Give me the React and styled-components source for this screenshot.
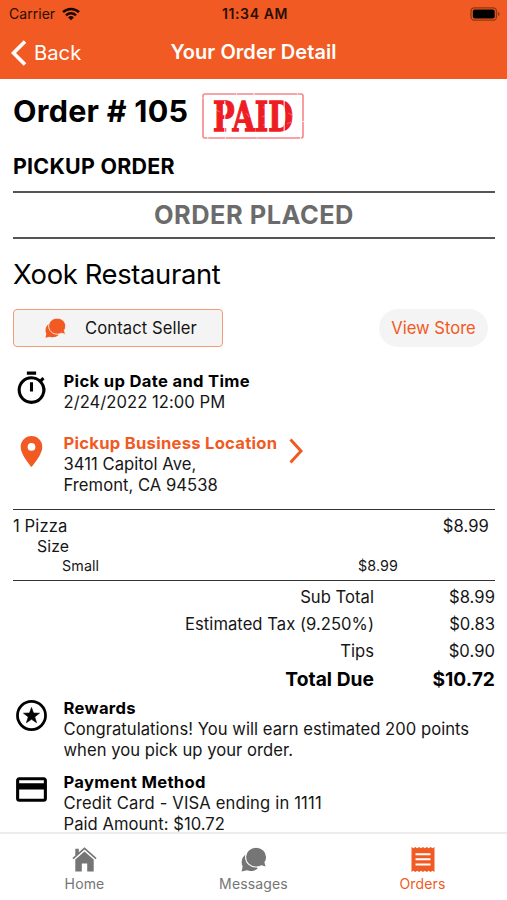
import React from "react"
import styled, { createGlobalStyle } from "styled-components"
import { MdOutlineTimer, MdLocationOn, MdCreditCard } from "react-icons/md"

const ORANGE = "#f15a22"

const GlobalStyle = createGlobalStyle`
  * {
    box-sizing: border-box;
  }
  body {
    margin: 0;
    background: #fff;
    color: #161616;
    font-family: Inter, "Liberation Sans", sans-serif;
    font-size: 16.6px;
    line-height: 21px;
    letter-spacing: 0.04px;
    white-space: nowrap;
  }
`

const Screen = styled.div`
  display: flex;
  flex-direction: column;
  width: 507px;
  height: 900px;
  overflow: hidden;
`

const Header = styled.header`
  flex: none;
  height: 79px;
  background: ${ORANGE};
`

const StatusBar = styled.div`
  display: grid;
  grid-template-columns: 1fr auto 1fr;
  align-items: center;
  height: 27px;
  padding: 0 6px 0 9px;
  color: #2b0d02;
  font-size: 14px;
`

const Carrier = styled.span`
  display: flex;
  align-items: center;
  gap: 7px;
`

const Clock = styled.span`
  font-weight: 600;
  font-size: 14px;
  letter-spacing: 0.6px;
`

const Battery = styled.svg`
  justify-self: end;
`

const NavBar = styled.div`
  display: grid;
  grid-template-columns: 1fr auto 1fr;
  align-items: center;
  height: 51px;
  padding: 0 10px;
  color: #fff;
`

const BackButton = styled.span`
  display: flex;
  align-items: center;
  gap: 7px;
  font-size: 20.2px;
`

const NavTitle = styled.span`
  font-size: 20px;
  font-weight: 600;
  letter-spacing: 0.05px;
`

const Content = styled.main`
  flex: 1;
  min-height: 0;
  padding: 0 12px 0 13px;
`

const OrderHeading = styled.div`
  display: flex;
  align-items: center;
  gap: 14px;
  height: 69px;
  padding-top: 6px;
`

const OrderNumber = styled.h1`
  margin: 0 0 12px;
  font-size: 30.5px;
  line-height: 36px;
  font-weight: 700;
  letter-spacing: 0.25px;
  color: #000;
`

const OrderType = styled.h2`
  margin: 0;
  padding: 5px 0 12px;
  font-size: 21.4px;
  line-height: 26px;
  font-weight: 700;
  letter-spacing: 0.25px;
  color: #000;
`

const OrderStatus = styled.div`
  height: 48px;
  border-top: 2px solid #555;
  border-bottom: 2px solid #555;
  color: #6b6b6b;
  font-size: 25.4px;
  line-height: 43px;
  font-weight: 700;
  letter-spacing: 0.5px;
  text-align: center;
`

const StoreName = styled.div`
  padding: 17px 0 17px;
  font-size: 27.4px;
  line-height: 36px;
  letter-spacing: -0.35px;
  color: #000;
`

const Actions = styled.div`
  display: flex;
  justify-content: space-between;
  padding-right: 7px;
`

const ContactButton = styled.button`
  display: flex;
  align-items: center;
  gap: 19px;
  width: 210px;
  height: 38px;
  padding: 0 0 0 31px;
  border: 1.5px solid #f29b78;
  border-radius: 4px;
  background: #f4f4f4;
  color: #161616;
  font: inherit;
  letter-spacing: 0.1px;
`

const StoreButton = styled.button`
  width: 109px;
  height: 38px;
  padding: 0;
  border: 0;
  border-radius: 19px;
  background: #f4f4f4;
  color: ${ORANGE};
  font: inherit;
`

const InfoRow = styled.section`
  display: grid;
  grid-template-columns: 37px auto 1fr;
  column-gap: 13.5px;
  height: ${(props) => props.$height}px;
  margin-top: ${(props) => props.$top || 0}px;
  line-height: 20.8px;
`

const InfoIcon = styled.span`
  display: flex;
  justify-content: center;
  height: 37px;
  margin-top: ${(props) => props.$shift || 0}px;
  color: ${(props) => props.$color || "#000"};
`

const InfoTitle = styled.div`
  color: ${(props) => props.$color || "#000"};
  font-weight: 700;
  letter-spacing: ${(props) => (props.$color ? 0.27 : 0.33)}px;
`

const CardText = styled.div`
  letter-spacing: 0.16px;
`

const Chevron = styled.svg`
  margin: 5px 0 0 -2px;
`

const Item = styled.div`
  height: 72px;
  border-top: 1.5px solid #333;
  border-bottom: 1.5px solid #333;
  padding: 6px 6px 0 0;
`

const ItemLine = styled.div`
  display: flex;
  justify-content: space-between;
  padding-left: ${(props) => props.$indent || 0}px;
  padding-right: ${(props) => props.$inset || 0}px;
  font-size: ${(props) => props.$size || 16.6}px;
  line-height: ${(props) => props.$line || 21}px;
  letter-spacing: 0.1px;
`

const Totals = styled.div`
  display: grid;
  grid-template-columns: 1fr 121px;
  padding-top: 3px;
  line-height: 27px;
  letter-spacing: 0.04px;
  text-align: right;
`

const TotalDue = styled.span`
  color: #000;
  font-size: 19.2px;
  line-height: 29px;
  font-weight: 700;
`

const TabBar = styled.nav`
  flex: none;
  display: grid;
  grid-template-columns: repeat(3, 1fr);
  height: 68px;
  border-top: 2px solid #ececec;
`

const Tab = styled.a`
  display: flex;
  flex-direction: column;
  align-items: center;
  justify-content: space-between;
  height: 61px;
  padding: 13px 0 1px;
  color: ${(props) => (props.$active ? ORANGE : "#757575")};
  font-size: 14px;
  letter-spacing: 0.15px;
`

const WifiIcon = () => (
  <svg width="18" height="14" viewBox="0 0 18 14" fill="none" stroke="#1a0800">
    <path d="M1 5.2a11.6 11.6 0 0 1 16 0" strokeWidth="2.5" />
    <path d="M4 8.3a7.3 7.3 0 0 1 10 0" strokeWidth="2.4" />
    <path d="M9 13.2 6.1 10.5a4.2 4.2 0 0 1 5.8 0Z" fill="#1a0800" stroke="none" />
  </svg>
)

const ChatIcon = ({ color, gap = "#fff", size = 24 }) => (
  <svg width={size} height={size * 0.96} viewBox="0 0 24 23">
    <path
      d="M6 6C2.500 7.500.6 10.300.6 14c0 1.500.3 2.800.9 4L.6 22.600l4.800-1.100c3.800 1.200 7.500.5 10-1.700Z"
      fill={color}
    />
    <path
      d="M14 .2c5.400 0 9.600 4 9.600 9 0 1.900-.5 3.600-1.500 5l1.400 4.600-4.600-1.500c-1.500.8-3.100 1.200-4.900 1.200-5.500 0-9.800-4.100-9.800-9.300S8.500.2 14 .2Z"
      fill={color}
      stroke={gap}
      strokeWidth="1"
    />
  </svg>
)

const StarIcon = () => (
  <svg width="37" height="37" viewBox="0 0 24 24">
    <circle cx="12" cy="12" r="9.100" fill="none" stroke="currentColor" strokeWidth="1.800" />
    <path
      d="M12 6.800 13.300 10.400 17.200 10.500 14.100 12.900 15.300 16.700 12 14.500 8.700 16.700 9.900 12.900 6.800 10.500 10.700 10.400Z"
      fill="currentColor"
      stroke="currentColor"
      strokeWidth=".4"
    />
  </svg>
)

const HomeIcon = () => (
  <svg width="25" height="25" viewBox="0 0 25 25" fill="currentColor">
    <path d="M12.500.300 17 4.300 24.600 11l-1.100 1.200-11-9.700-11 9.700L.4 11 3.300 8.400V1.700h3.500v3.600Z" />
    <path d="M12.500 4.400 21.700 12.500V24.600h-6.500v-8h-5.400v8H3.300V12.500Z" />
  </svg>
)

const ReceiptIcon = () => (
  <svg width="24" height="25" viewBox="0 0 24 25">
    <path
      d="M.5 0 2.400 1.300 4.300 0l1.900 1.300L8.100 0 10 1.300 12 0l1.900 1.300L15.800 0l1.900 1.300L19.600 0l1.900 1.300L23.500 0v25l-2-1.300-1.900 1.300-1.900-1.300-1.900 1.300-1.900-1.300L12 25l-2-1.300L8.100 25l-1.900-1.300L4.300 25l-1.900-1.300L.5 25Z"
      fill="currentColor"
    />
    <path d="M4.500 7.200h15M4.500 12.300h15M4.500 17.400h15" stroke="#fff" strokeWidth="2" />
  </svg>
)

const Stamp = styled.svg`
  overflow: visible;
`

const PaidStamp = () => (
  <Stamp width="102" height="63" viewBox="0 -8 102 63">
    <rect
      x="1"
      y="1"
      width="100"
      height="44"
      rx="2"
      fill="none"
      stroke="#f4868a"
      strokeWidth="1.600"
      strokeDasharray="31 .6 17 .8 43 .5"
    />
    <text
      x="11"
      y="37.500"
      fill="#ee1c23"
      stroke="#ee1c23"
      strokeWidth="1.300"
      fontFamily="DejaVu Serif, serif"
      fontWeight="700"
      fontSize="41"
      letterSpacing="0"
      textLength="80"
      lengthAdjust="spacingAndGlyphs"
    >
      PAID
    </text>
    {/* stencil cuts and worn ink */}
    <g stroke="#fff" fill="none">
      <path d="M22.800 8v32M82.200 8v32" strokeWidth="1.200" opacity=".85" />
      <path
        d="M14 17l4 2M44 20l3 4M61 14l4 2M60 24l4-2M61 32l3-1M76 15l4 2M76 25l4-2M86 20l4 2M85 31l4-2"
        strokeWidth=".8"
        opacity=".4"
      />
    </g>
  </Stamp>
)

const App = () => {
  return (
    <Screen>
      <GlobalStyle />
      <Header>
        <StatusBar>
          <Carrier>
            Carrier
            <WifiIcon />
          </Carrier>
          <Clock>11:34 AM</Clock>
          <Battery width="31" height="14" viewBox="0 0 31 14">
            <rect x="1" y=".8" width="25.500" height="12.400" rx="3.500" fill="none" stroke="#8f3714" strokeWidth="1.300" />
            <rect x="2.800" y="2.600" width="21.900" height="8.800" rx="2" fill="#000" />
            <path d="M28 5c2 .5 2 3.500 0 4Z" fill="#8f3714" />
          </Battery>
        </StatusBar>
        <NavBar>
          <BackButton>
            <svg width="17" height="26" viewBox="0 0 17 26" fill="none" stroke="#fff" strokeWidth="3.600">
              <path d="M15 1.500 3.500 13 15 24.500" />
            </svg>
            Back
          </BackButton>
          <NavTitle>Your Order Detail</NavTitle>
        </NavBar>
      </Header>

      <Content>
        <OrderHeading>
          <OrderNumber>Order # 105</OrderNumber>
          <PaidStamp />
        </OrderHeading>
        <OrderType>PICKUP ORDER</OrderType>
        <OrderStatus>ORDER PLACED</OrderStatus>
        <StoreName>Xook Restaurant</StoreName>
        <Actions>
          <ContactButton>
            <ChatIcon color={ORANGE} gap="#f4f4f4" size={21} />
            Contact Seller
          </ContactButton>
          <StoreButton>View Store</StoreButton>
        </Actions>

        <InfoRow $top={24} $height={62}>
          <InfoIcon $shift={-1}>
            <MdOutlineTimer size={37} />
          </InfoIcon>
          <div>
            <InfoTitle>Pick up Date and Time</InfoTitle>
            <div>2/24/2022 12:00 PM</div>
          </div>
        </InfoRow>
        <InfoRow $height={76}>
          <InfoIcon $color={ORANGE}>
            <MdLocationOn size={37} />
          </InfoIcon>
          <div>
            <InfoTitle $color={ORANGE}>Pickup Business Location</InfoTitle>
            <div>3411 Capitol Ave,</div>
            <div>Fremont, CA 94538</div>
          </div>
          <Chevron width="14" height="26" viewBox="0 0 14 26" fill="none" stroke={ORANGE} strokeWidth="3">
            <path d="M1.500 1.500 12 13 1.500 24.500" />
          </Chevron>
        </InfoRow>

        <Item>
          <ItemLine>
            <span>1 Pizza</span>
            <span>$8.99</span>
          </ItemLine>
          <ItemLine $indent={24} $size={15.800} $line={20}>
            Size
          </ItemLine>
          <ItemLine $indent={49} $inset={91} $size={14.300} $line={17}>
            <span>Small</span>
            <span>$8.99</span>
          </ItemLine>
        </Item>

        <Totals>
          <span>Sub Total</span>
          <span>$8.99</span>
          <span>Estimated Tax (9.250%)</span>
          <span>$0.83</span>
          <span>Tips</span>
          <span>$0.90</span>
          <TotalDue>Total Due</TotalDue>
          <TotalDue>$10.72</TotalDue>
        </Totals>

        <InfoRow $top={4} $height={74}>
          <InfoIcon $shift={-1}>
            <StarIcon />
          </InfoIcon>
          <div>
            <InfoTitle>Rewards</InfoTitle>
            <div>Congratulations! You will earn estimated 200 points</div>
            <div>when you pick up your order.</div>
          </div>
        </InfoRow>
        <InfoRow $height={62}>
          <InfoIcon $shift={-1}>
            <MdCreditCard size={37} />
          </InfoIcon>
          <div>
            <InfoTitle>Payment Method</InfoTitle>
            <CardText>Credit Card - VISA ending in 1111</CardText>
            <div>Paid Amount: $10.72</div>
          </div>
        </InfoRow>
      </Content>

      <TabBar>
        <Tab>
          <HomeIcon />
          Home
        </Tab>
        <Tab>
          <ChatIcon color="#757575" size={26} />
          Messages
        </Tab>
        <Tab $active>
          <ReceiptIcon />
          Orders
        </Tab>
      </TabBar>
    </Screen>
  )
}

export default App
